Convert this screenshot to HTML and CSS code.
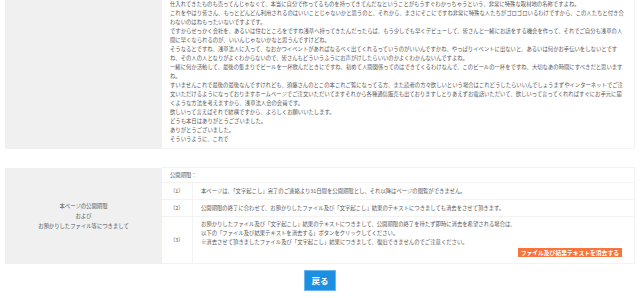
FILE: index.html
```html
<!DOCTYPE html>
<html lang="ja">
<head>
<meta charset="UTF-8">
<meta name="viewport" content="width=device-width, initial-scale=1.0">
<title>文字起こし結果</title>
<link rel="stylesheet" href="styles.css">
</head>
<body>
    <div class="page">
        <!-- 文字起こし本文 -->
        <table class="record">
            <tr>
                <th></th>
                <td class="transcript">
                    <p>仕入れてきたものも売ってんじゃなくて、本当に自分で作ってるものを持ってきてんだなということがもうすぐわかっちゃうという、非常に特殊な取材地の名称ですよね。</p>
                    <p>これをやはり皆さん、もっとどんどん利用されるのはいいことじゃないかと思うのと、それから、まさにそこにですね非常に特殊な人たちがゴロゴロいるわけですから、この人たちと付き合わないのはねもったいないですよです。</p>
                    <p>ですからせっかく会社を、あるいは住むところをですね浅草へ持ってきたんだったらば、もう少しでも早くデビューして、皆さんと一緒にお話をする機会を作って、それでご自分も浅草の人間に早くなられるのが、いいんじゃないかなと思うんですけどね。</p>
                    <p>そうなるとですね、浅草法人に入って、なおかつイベントがあればなるべく出てくれるっていうのがいいんですかね、やっぱりイベントに出ないと、あるいは何かお手伝いをしないとですね、その人の人となりがよくわからないので、皆さんもどういうふうにお声がけしたらいいのかよくわかんないんですよね。</p>
                    <p>一緒に何か活動して、最後の集まりでビールを一杯飲んだときにですね、初めて人間関係ってのはできてくるわけなんで、このビールの一杯をですね、大切なあの時間にすべきだと思いますね。</p>
                    <p>すいませんこれで最後の最後なんですけれども、須藤さんのとこの本これご覧になってる方、また読者の方々欲しいという場合はこれどうしたらいいんでしょうまずやインターネットでご注文いただけるようになっておりますホームページでご注文いただいてますそれから各種通信販売も出ておりますしとりあえずお電話いただいて、欲しいって言ってくれればすぐにお手元に届くような方法を考えますから、浅草法人会の会員です。</p>
                    <p>欲しいって言えばそれで結構ですから、よろしくお願いいたします。</p>
                    <p>どうも本日はありがとうございました。</p>
                    <p>ありがとうございました。</p>
                    <p>そういうように、これで</p>
                </td>
            </tr>
        </table>

        <!-- 公開期限について -->
        <table class="record notice">
            <tr>
                <th rowspan="4">本ページの公開期限<br>および<br>お預かりしたファイル等につきまして</th>
                <td class="head" colspan="2">公開期限：</td>
            </tr>
            <tr>
                <td class="num">（1）</td>
                <td>本ページは、「文字起こし」完了のご連絡より31日間を公開期限とし、それ以降はページの閲覧ができません。</td>
            </tr>
            <tr>
                <td class="num">（2）</td>
                <td>公開期限の終了に合わせて、お預かりしたファイル及び「文字起こし」結果のテキストにつきましても消去をさせて頂きます。</td>
            </tr>
            <tr>
                <td class="num">（3）</td>
                <td class="last">
                    お預かりしたファイル及び「文字起こし」結果のテキストにつきまして、公開期限の終了を待たず即時に消去を希望される場合は、<br>
                    以下の「ファイル及び結果テキストを消去する」ボタンをクリックしてください。<br>
                    ※消去させて頂きましたファイル及び「文字起こし」結果につきまして、復旧できませんのでご注意ください。
                    <div class="delete-row"><button class="btn-delete">ファイル及び結果テキストを消去する</button></div>
                </td>
            </tr>
        </table>

        <div class="back">
            <button class="btn-back">戻る</button>
        </div>
    </div>
</body>
</html>
```

FILE: styles.css
```css
body {
    margin: 0;
    background-color: #fff;
    font-family: "Noto Sans CJK JP", "Noto Sans", sans-serif;
    color: #555;
}
.page {
    padding: 0 5px;
}
.record {
    width: 100%;
    border-collapse: collapse;
    font-size: 5.35px;
    line-height: 9px;
}
.record th {
    width: 157px;
    padding: 0;
    background-color: #f0f0f0;
    font-weight: normal;
    text-align: center;
    vertical-align: middle;
    line-height: 10px;
}
.record td {
    border: 1px solid #f3f3f3;
    border-left: none;
    padding: 4px 8px 3px;
    vertical-align: middle;
}
.transcript {
    padding: 0 8px 4px 8px !important;
    border-top: none !important;
}
.transcript p {
    margin: 0;
}
.notice {
    margin-top: 18px;
}
.notice td.head {
    padding: 3px 8px 2px;
}
.notice td.num {
    width: 22px;
    padding: 4px 0 3px 8px;
    white-space: nowrap;
}
.notice td.last {
    padding-top: 3px;
    padding-bottom: 6px;
}
.delete-row {
    display: flex;
    justify-content: flex-end;
    margin-top: 1px;
    margin-right: 4px;
}
.btn-delete {
    display: block;
    border: none;
    padding: 0 3px;
    height: 9px;
    line-height: 9px;
    font-family: inherit;
    font-size: 5.8px;
    font-weight: bold;
    color: #fff;
    background-color: #f7743c;
}
.back {
    display: flex;
    justify-content: center;
    margin-top: 6px;
}
.btn-back {
    display: block;
    width: 32px;
    height: 21px;
    padding: 0;
    border: 1px solid #6ab6ef;
    font-family: inherit;
    font-size: 8.5px;
    line-height: 19px;
    font-weight: bold;
    color: #fff;
    background-color: #1b8fe2;
    cursor: pointer;
}
```
